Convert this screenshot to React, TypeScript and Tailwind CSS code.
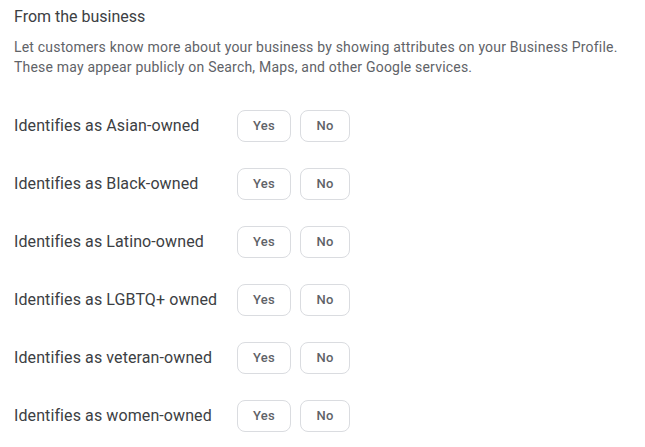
const attributes = [
  "Identifies as Asian-owned",
  "Identifies as Black-owned",
  "Identifies as Latino-owned",
  "Identifies as LGBTQ+ owned",
  "Identifies as veteran-owned",
  "Identifies as women-owned",
];

function ChoiceButton({ label, width }: { label: string; width: string }) {
  return (
    <button
      className={`${width} h-8 rounded-lg border border-[#dadce0] bg-white text-[13px] font-medium tracking-[0.25px] text-[#5f6368]`}
    >
      {label}
    </button>
  );
}

export default function App() {
  return (
    <div className="min-h-screen bg-white px-[14px] pt-[7px] font-['Roboto',sans-serif]">
      <h2 className="text-[16px] leading-[20px] text-[#3c4043]">From the business</h2>
      <p className="mt-[10px] text-[14px] leading-[20px] tracking-[0.2px] text-[#5f6368]">
        Let customers know more about your business by showing attributes on your Business Profile.
        <br />
        These may appear publicly on Search, Maps, and other Google services.
      </p>

      {/* Attribute rows */}
      <div className="mt-[33px] flex flex-col gap-[26px]">
        {attributes.map((name) => (
          <div key={name} className="flex items-center">
            <span className="w-[223px] text-[16px] tracking-[0.1px] text-[#3c4043]">{name}</span>
            <div className="flex gap-[9px]">
              <ChoiceButton label="Yes" width="w-[54px]" />
              <ChoiceButton label="No" width="w-[50px]" />
            </div>
          </div>
        ))}
      </div>
    </div>
  );
}
